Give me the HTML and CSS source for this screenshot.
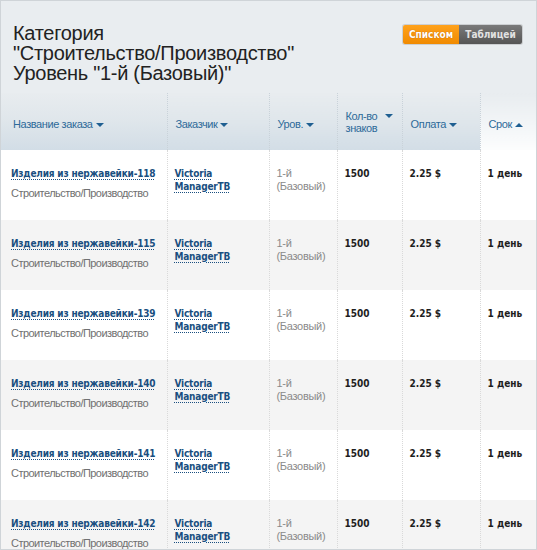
FILE: index.html
```html
<!DOCTYPE html>
<html>
<head>
<meta charset="utf-8">
<link rel="stylesheet" href="styles.css">
</head>
<body>
<div class="page">
  <div class="top">
    <h1 class="title">Категория<br>"Строительство/Производство"<br>Уровень "1-й (Базовый)"</h1>
    <div class="switch">
      <span class="sw sw-on">Списком</span><span class="sw sw-off">Таблицей</span>
    </div>
  </div>
  <table class="grid">
    <colgroup>
      <col class="c1"><col class="c2"><col class="c3"><col class="c4"><col class="c5"><col class="c6">
    </colgroup>
    <thead>
      <tr>
        <th><span class="hl">Название заказа<i class="dn"></i></span></th>
        <th><span class="hl">Заказчик<i class="dn"></i></span></th>
        <th><span class="hl">Уров.<i class="dn"></i></span></th>
        <th><span class="hl two">Кол-во<br>знаков<i class="dn abs"></i></span></th>
        <th><span class="hl">Оплата<i class="dn"></i></span></th>
        <th class="sorted"><span class="hl">Срок<i class="up"></i></span></th>
      </tr>
    </thead>
    <tbody>
      <tr>
        <td><a class="lnk">Изделия из нержавейки-118</a><div class="cat">Строительство/Производство</div></td>
        <td><a class="lnk">Victoria<br>ManagerTB</a></td>
        <td class="lvl">1-й<br>(Базовый)</td>
        <td class="num">1500</td>
        <td class="num">2.25 $</td>
        <td class="num">1 день</td>
      </tr>
      <tr>
        <td><a class="lnk">Изделия из нержавейки-115</a><div class="cat">Строительство/Производство</div></td>
        <td><a class="lnk">Victoria<br>ManagerTB</a></td>
        <td class="lvl">1-й<br>(Базовый)</td>
        <td class="num">1500</td>
        <td class="num">2.25 $</td>
        <td class="num">1 день</td>
      </tr>
      <tr>
        <td><a class="lnk">Изделия из нержавейки-139</a><div class="cat">Строительство/Производство</div></td>
        <td><a class="lnk">Victoria<br>ManagerTB</a></td>
        <td class="lvl">1-й<br>(Базовый)</td>
        <td class="num">1500</td>
        <td class="num">2.25 $</td>
        <td class="num">1 день</td>
      </tr>
      <tr>
        <td><a class="lnk">Изделия из нержавейки-140</a><div class="cat">Строительство/Производство</div></td>
        <td><a class="lnk">Victoria<br>ManagerTB</a></td>
        <td class="lvl">1-й<br>(Базовый)</td>
        <td class="num">1500</td>
        <td class="num">2.25 $</td>
        <td class="num">1 день</td>
      </tr>
      <tr>
        <td><a class="lnk">Изделия из нержавейки-141</a><div class="cat">Строительство/Производство</div></td>
        <td><a class="lnk">Victoria<br>ManagerTB</a></td>
        <td class="lvl">1-й<br>(Базовый)</td>
        <td class="num">1500</td>
        <td class="num">2.25 $</td>
        <td class="num">1 день</td>
      </tr>
      <tr>
        <td><a class="lnk">Изделия из нержавейки-142</a><div class="cat">Строительство/Производство</div></td>
        <td><a class="lnk">Victoria<br>ManagerTB</a></td>
        <td class="lvl">1-й<br>(Базовый)</td>
        <td class="num">1500</td>
        <td class="num">2.25 $</td>
        <td class="num">1 день</td>
      </tr>
    </tbody>
  </table>
</div>
</body>
</html>
```

FILE: styles.css
```css
html, body {
  margin: 0;
  padding: 0;
  background: #ffffff;
}
.page {
  width: 535px;
  height: 548px;
  border: 1px solid #cfd4d8;
  overflow: hidden;
  background: #e9edf0;
  font-family: "Liberation Sans", Arial, sans-serif;
}
.top {
  display: flex;
  justify-content: space-between;
  align-items: flex-start;
  height: 92px;
  padding: 0 14px 0 12px;
}
.title {
  margin: 22px 0 0 0;
  font-size: 20px;
  line-height: 20px;
  letter-spacing: -0.3px;
  font-weight: normal;
  color: #222222;
}
.switch {
  margin-top: 24px;
  display: flex;
  height: 19px;
  border-radius: 2px;
  overflow: hidden;
  box-shadow: 0 0 0 1px rgba(120,120,120,0.25);
}
.sw {
  display: flex;
  align-items: center;
  justify-content: center;
  font-family: "DejaVu Sans Condensed", "DejaVu Sans", sans-serif;
  font-size: 10px;
  font-weight: bold;
}
.sw-on {
  width: 56px;
  color: #ffffff;
  background: linear-gradient(#ffa21c, #f08a00);
  text-shadow: 0 0 1px #b35a00;
}
.sw-off {
  width: 63px;
  color: #e2e2e2;
  background: linear-gradient(#7a7a7a, #555555);
}
.grid {
  width: 535px;
  border-collapse: collapse;
  table-layout: fixed;
}
.c1 { width: 166px; }
.c2 { width: 102px; }
.c3 { width: 68px; }
.c4 { width: 65px; }
.c5 { width: 78px; }
.c6 { width: 56px; }
th {
  height: 57px;
  padding: 0 0 0 8px;
  text-align: left;
  vertical-align: middle;
  font-weight: normal;
  font-size: 11px;
  letter-spacing: -0.4px;
  color: #2d6a99;
  background: linear-gradient(#e8ecef 0%, #dfe6eb 50%, #d2dde6 100%);
  border-left: 1px dotted #c9d2d9;
}
th:first-child {
  border-left: none;
  padding-left: 12px;
}
th.sorted {
  background: linear-gradient(#e8ecef 0%, #f2f5f7 55%, #fcfdfd 100%);
}
.hl {
  display: inline-block;
  position: relative;
  line-height: 12px;
  padding-top: 4px;
}
.hl.two {
  padding-top: 0;
  padding-right: 16px;
}
.dn, .up {
  display: inline-block;
  width: 0;
  height: 0;
  margin-left: 3px;
  vertical-align: 1px;
  border-left: 4px solid transparent;
  border-right: 4px solid transparent;
}
.dn { border-top: 4px solid #1f5f91; }
.up { border-bottom: 4px solid #1f5f91; }
.dn.abs {
  position: absolute;
  right: 0;
  top: 4px;
}
td {
  height: 70px;
  box-sizing: border-box;
  padding: 17px 2px 0 7px;
  vertical-align: top;
  font-size: 11px;
  line-height: 13px;
  border-left: 1px dotted #d9d9d9;
  background: #ffffff;
}
td:first-child {
  border-left: none;
  padding-left: 10px;
}
tbody tr:nth-child(even) td {
  background: #f4f4f4;
}
.lnk {
  font-family: "DejaVu Sans Condensed", "DejaVu Sans", sans-serif;
  font-size: 10px;
  letter-spacing: -0.2px;
  color: #1a4f80;
  font-weight: bold;
  text-decoration: underline dotted #1a4f80;
  text-underline-offset: 2px;
  white-space: nowrap;
}
.cat {
  margin-top: 7px;
  color: #707070;
  letter-spacing: -0.55px;
  white-space: nowrap;
}
.lvl {
  color: #8a8a8a;
  letter-spacing: -0.3px;
}
.num {
  font-family: "DejaVu Sans Condensed", "DejaVu Sans", sans-serif;
  font-size: 10px;
  color: #1e1e1e;
  font-weight: bold;
}
```
